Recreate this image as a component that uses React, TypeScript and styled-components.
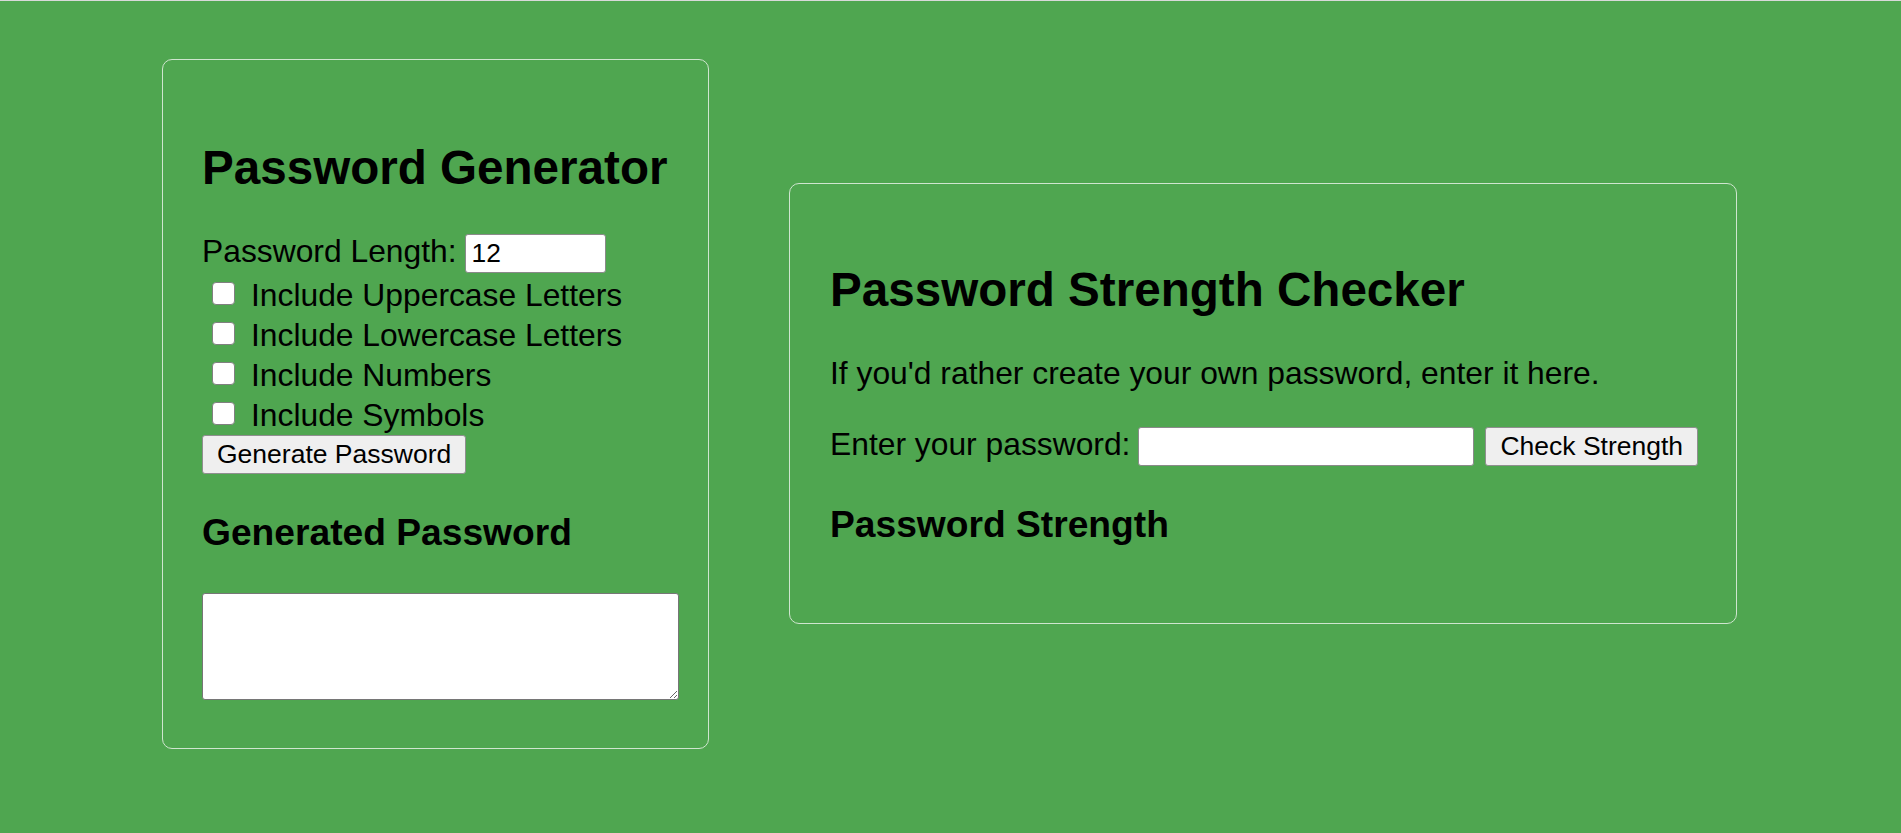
import React from "react";
import styled, { createGlobalStyle } from "styled-components";

const GlobalStyle = createGlobalStyle`
  html, body {
    margin: 0;
    padding: 0;
  }
  body {
    background: #4fa650;
    border-top: 1px solid #d9d9d9;
    min-height: 832px;
    font-family: "Liberation Sans", Arial, sans-serif;
    font-size: 31.8px;
    color: #000;
  }
`;

const Page = styled.main`
  display: flex;
  justify-content: center;
  align-items: center;
  gap: 80px;
  height: 805px;
  padding-right: 2px;
`;

const Card = styled.section<{ $width: number; $padding: string }>`
  box-sizing: border-box;
  width: ${(p) => p.$width}px;
  padding: ${(p) => p.$padding};
  border: 1px solid #cfe5cf;
  border-radius: 10px;
`;

const Title = styled.h1<{ $mt: number; $mb: number }>`
  margin: ${(p) => p.$mt}px 0 ${(p) => p.$mb}px;
  font-size: 47.6px;
  line-height: 55px;
  font-weight: 700;
  white-space: nowrap;
`;

const Subtitle = styled.h3<{ $mt: number; $mb: number }>`
  margin: ${(p) => p.$mt}px 0 ${(p) => p.$mb}px;
  font-size: 37.2px;
  line-height: 43px;
  font-weight: 700;
  white-space: nowrap;
`;

const Form = styled.div`
  display: flex;
  flex-direction: column;
  align-items: flex-start;
`;

const FieldRow = styled.div<{ $height: number }>`
  display: flex;
  align-items: baseline;
  gap: 8px;
  height: ${(p) => p.$height}px;
  white-space: nowrap;
`;

const FieldLabel = styled.label`
  line-height: 37px;
`;

const TextInput = styled.input<{ $width: number }>`
  box-sizing: border-box;
  width: ${(p) => p.$width}px;
  height: 39px;
  margin: 0;
  padding: 0 6px;
  border: 1px solid #8a8a8a;
  border-radius: 3px;
  background: #fff;
  font-family: "Liberation Sans", Arial, sans-serif;
  font-size: 26.4px;
  color: #000;
  &::-webkit-inner-spin-button,
  &::-webkit-outer-spin-button {
    -webkit-appearance: none;
    margin: 0;
  }
  -moz-appearance: textfield;
`;

const OptionRow = styled.label`
  display: flex;
  align-items: center;
  height: 40px;
  white-space: nowrap;
`;

const Checkbox = styled.input`
  appearance: none;
  -webkit-appearance: none;
  box-sizing: border-box;
  width: 23px;
  height: 23px;
  margin: -3px 16px 0 10px;
  background: #fff;
  border: 1px solid #808080;
  border-radius: 4px;
`;

const OptionText = styled.span`
  line-height: 40px;
`;

const Button = styled.button<{ $ml?: number }>`
  box-sizing: border-box;
  height: 39px;
  margin: 0 0 0 ${(p) => p.$ml ?? 0}px;
  padding: 0 14px;
  border: 1px solid #8f8f8f;
  border-radius: 3px;
  background: #efefef;
  font-family: "Liberation Sans", Arial, sans-serif;
  font-size: 26.5px;
  color: #000;
  white-space: nowrap;
`;

const Output = styled.textarea`
  display: block;
  box-sizing: border-box;
  width: 477px;
  height: 107px;
  margin: 0;
  border: 1px solid #767676;
  border-radius: 3px;
  background: #fff;
  font-family: "Liberation Mono", monospace;
  font-size: 26px;
`;

const Intro = styled.p`
  margin: 0 0 34px;
  line-height: 37px;
  white-space: nowrap;
`;

const options = [
  "Include Uppercase Letters",
  "Include Lowercase Letters",
  "Include Numbers",
  "Include Symbols",
];

export default function App() {
  return (
    <>
      <GlobalStyle />
      <Page>
        <Card $width={547} $padding="40px 28px 48px 39px">
          <Title $mt={40} $mb={38}>Password Generator</Title>
          <Form>
            <FieldRow $height={42}>
              <FieldLabel htmlFor="length">Password Length:</FieldLabel>
              <TextInput id="length" type="number" $width={141} defaultValue={12} />
            </FieldRow>
            {options.map((o) => (
              <OptionRow key={o}>
                <Checkbox type="checkbox" />
                <OptionText>{o}</OptionText>
              </OptionRow>
            ))}
            <Button type="button">Generate Password</Button>
          </Form>
          <Subtitle $mt={37.5} $mb={38.5}>Generated Password</Subtitle>
          <Output readOnly />
        </Card>
        <Card $width={948} $padding="40px">
          <Title $mt={38} $mb={38.5}>Password Strength Checker</Title>
          <Intro>If you'd rather create your own password, enter it here.</Intro>
          <FieldRow $height={40}>
            <FieldLabel htmlFor="pw">Enter your password:</FieldLabel>
            <TextInput id="pw" type="password" $width={336} />
            <Button type="button" $ml={3}>Check Strength</Button>
          </FieldRow>
          <Subtitle $mt={36.5} $mb={37.5}>Password Strength</Subtitle>
        </Card>
      </Page>
    </>
  );
}
